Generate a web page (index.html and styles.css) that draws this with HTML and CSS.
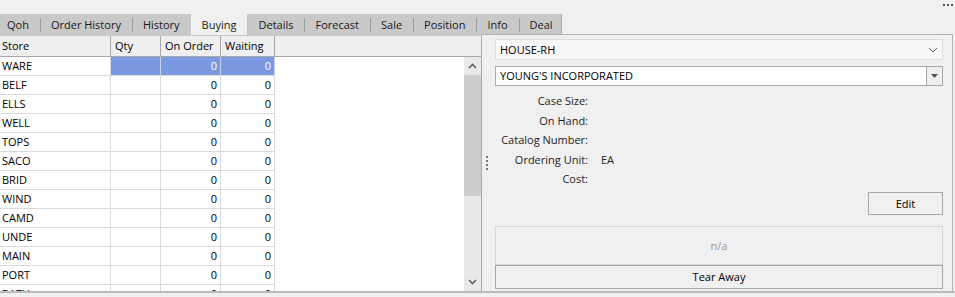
FILE: index.html
```html
<!DOCTYPE html>
<html lang="en">

<head>
  <meta charset="utf-8" />
  <title>Buying</title>
  <meta name="viewport" content="width=device-width, initial-scale=1" />
  <link rel="stylesheet" href="styles.css">
</head>

<body>
  <div class="window">
    <div class="topbar">
      <div class="more"><span></span><span></span><span></span></div>
    </div>

    <div class="tabs">
      <div class="tab">Qoh</div>
      <div class="tab">Order History</div>
      <div class="tab">History</div>
      <div class="tab active">Buying</div>
      <div class="tab">Details</div>
      <div class="tab">Forecast</div>
      <div class="tab">Sale</div>
      <div class="tab">Position</div>
      <div class="tab">Info</div>
      <div class="tab">Deal</div>
    </div>

    <div class="main">
      <!-- store grid -->
      <div class="left-panel">
        <div class="grid-head">
          <div class="hcell col-store">Store</div>
          <div class="hcell col-qty">Qty</div>
          <div class="hcell col-order">On Order</div>
          <div class="hcell col-wait">Waiting</div>
        </div>
        <div class="grid-body">
          <div class="rows">
            <div class="row selected">
              <div class="cell col-store">WARE</div>
              <div class="cell col-qty"></div>
              <div class="cell col-order num">0</div>
              <div class="cell col-wait num">0</div>
            </div>
            <div class="row"><div class="cell col-store">BELF</div><div class="cell col-qty"></div><div class="cell col-order num">0</div><div class="cell col-wait num">0</div></div>
            <div class="row"><div class="cell col-store">ELLS</div><div class="cell col-qty"></div><div class="cell col-order num">0</div><div class="cell col-wait num">0</div></div>
            <div class="row"><div class="cell col-store">WELL</div><div class="cell col-qty"></div><div class="cell col-order num">0</div><div class="cell col-wait num">0</div></div>
            <div class="row"><div class="cell col-store">TOPS</div><div class="cell col-qty"></div><div class="cell col-order num">0</div><div class="cell col-wait num">0</div></div>
            <div class="row"><div class="cell col-store">SACO</div><div class="cell col-qty"></div><div class="cell col-order num">0</div><div class="cell col-wait num">0</div></div>
            <div class="row"><div class="cell col-store">BRID</div><div class="cell col-qty"></div><div class="cell col-order num">0</div><div class="cell col-wait num">0</div></div>
            <div class="row"><div class="cell col-store">WIND</div><div class="cell col-qty"></div><div class="cell col-order num">0</div><div class="cell col-wait num">0</div></div>
            <div class="row"><div class="cell col-store">CAMD</div><div class="cell col-qty"></div><div class="cell col-order num">0</div><div class="cell col-wait num">0</div></div>
            <div class="row"><div class="cell col-store">UNDE</div><div class="cell col-qty"></div><div class="cell col-order num">0</div><div class="cell col-wait num">0</div></div>
            <div class="row"><div class="cell col-store">MAIN</div><div class="cell col-qty"></div><div class="cell col-order num">0</div><div class="cell col-wait num">0</div></div>
            <div class="row"><div class="cell col-store">PORT</div><div class="cell col-qty"></div><div class="cell col-order num">0</div><div class="cell col-wait num">0</div></div>
            <div class="row"><div class="cell col-store">BATH</div><div class="cell col-qty"></div><div class="cell col-order num">0</div><div class="cell col-wait num">0</div></div>
          </div>
          <div class="scrollbar">
            <div class="sb-btn">
              <svg width="9" height="6" viewBox="0 0 9 6"><path d="M1 5 L4.5 1.5 L8 5" fill="none" stroke="#606060" stroke-width="1.6"/></svg>
            </div>
            <div class="sb-thumb"></div>
            <div class="sb-track"></div>
            <div class="sb-btn">
              <svg width="9" height="6" viewBox="0 0 9 6"><path d="M1 1 L4.5 4.5 L8 1" fill="none" stroke="#606060" stroke-width="1.6"/></svg>
            </div>
          </div>
        </div>
      </div>

      <!-- vendor details -->
      <div class="right-panel">
        <div class="grip"><span></span><span></span><span></span><span></span></div>

        <div class="select">
          <span>HOUSE-RH</span>
          <svg width="10" height="6" viewBox="0 0 10 6"><path d="M1 1 L5 5 L9 1" fill="none" stroke="#606060" stroke-width="1"/></svg>
        </div>

        <div class="combo">
          <span class="combo-text">YOUNG'S INCORPORATED</span>
          <span class="combo-btn">
            <svg width="7" height="4" viewBox="0 0 7 4"><path d="M0 0 H7 L3.5 4 Z" fill="#555"/></svg>
          </span>
        </div>

        <div class="fields">
          <div class="label">Case Size:</div><div class="value"></div>
          <div class="label">On Hand:</div><div class="value"></div>
          <div class="label">Catalog Number:</div><div class="value"></div>
          <div class="label">Ordering Unit:</div><div class="value">EA</div>
          <div class="label">Cost:</div><div class="value"></div>
        </div>

        <div class="edit-row">
          <div class="button edit">Edit</div>
        </div>

        <div class="preview">n/a</div>
        <div class="button tear">Tear Away</div>
      </div>
    </div>
  </div>
</body>

</html>
```

FILE: styles.css
```css
/* Global */
* {
  box-sizing: border-box;
  padding: 0;
  margin: 0;
}

body {
  background-color: #f0f0f0;
  font-family: "Open Sans", "Noto Sans", sans-serif;
  font-size: 11px;
  color: #000;
}

.window {
  width: 955px;
  height: 297px;
  overflow: hidden;
}

/* top strip with the overflow dots */
.topbar {
  height: 14px;
  display: flex;
  justify-content: flex-end;
  padding: 4px 2px 0 0;
}

.more {
  display: flex;
  gap: 2px;
  height: 2px;
}

.more span {
  width: 2px;
  height: 2px;
  background-color: #555;
}

/* tabs */
.tabs {
  width: 562px;
  height: 21px;
  display: flex;
  background-color: #c9c9c9;
  border-right: 1px solid #a9a9a9;
}

.tab {
  position: relative;
  padding: 0 11px;
  line-height: 21px;
  white-space: nowrap;
  color: #1a1a1a;
}

.tab:first-child {
  padding-left: 7px;
}

.tab + .tab::before {
  content: "";
  position: absolute;
  left: 0;
  top: 4px;
  height: 14px;
  border-left: 1px solid #9c9c9c;
}

.tab.active {
  background-color: #f0f0f0;
}

.tab.active::before,
.tab.active + .tab::before {
  display: none;
}

/* main area */
.main {
  display: flex;
  height: 258px;
  border-bottom: 2px solid #bababa;
}

.left-panel {
  width: 482px;
  display: flex;
  flex-direction: column;
  border-right: 1px solid #a8a8a8;
  background-color: #fff;
}

.grid-head {
  display: flex;
  height: 22px;
  background-color: #efefef;
  border-top: 1px solid #c9c9c9;
  border-bottom: 1px solid #a8a8a8;
}

.hcell {
  line-height: 20px;
  padding-left: 4px;
  border-right: 1px solid #a8a8a8;
}

.hcell.col-store {
  padding-left: 2px;
}

.col-store {
  width: 111px;
}

.col-qty {
  width: 50px;
}

.col-order {
  width: 60px;
}

.col-wait {
  width: 54px;
}

.grid-body {
  flex: 1;
  display: flex;
  min-height: 0;
}

.rows {
  flex: 1;
  overflow: hidden;
}

.row {
  display: flex;
  height: 19px;
}

.cell {
  line-height: 18px;
  padding-left: 2px;
  border-right: 1px solid #dadada;
  border-bottom: 1px solid #dadada;
}

.cell.num {
  text-align: right;
  padding-right: 3px;
}

.row.selected .col-qty,
.row.selected .col-order,
.row.selected .col-wait {
  background-color: #7a99e0;
  color: #fff;
  border-right-color: #c6d2f0;
}

/* scrollbar */
.scrollbar {
  width: 17px;
  display: flex;
  flex-direction: column;
  background-color: #e9e9e9;
}

.sb-btn {
  height: 18px;
  display: flex;
  align-items: center;
  justify-content: center;
}

.sb-thumb {
  height: 121px;
  background-color: #cdcdcd;
}

.sb-track {
  flex: 1;
}

/* right panel */
.right-panel {
  position: relative;
  flex: 1;
  margin-right: 2px;
  margin-top: -1px;
  padding: 4px 9px 0 13px;
  border-top: 1px solid #b4b4b4;
  border-right: 1px solid #b4b4b4;
}

.grip {
  position: absolute;
  left: 4px;
  top: 121px;
  display: flex;
  flex-direction: column;
  gap: 2px;
}

.grip span {
  width: 2px;
  height: 2px;
  background-color: #777;
}

.select {
  height: 21px;
  display: flex;
  align-items: center;
  justify-content: space-between;
  padding: 0 4px;
  background-color: #f8f8f8;
  border: 1px solid #dcdcdc;
}

.combo {
  margin-top: 6px;
  height: 20px;
  display: flex;
  background-color: #fff;
  border: 1px solid #a8a8a8;
}

.combo-text {
  flex: 1;
  line-height: 18px;
  padding-left: 4px;
}

.combo-btn {
  width: 16px;
  display: flex;
  align-items: center;
  justify-content: center;
  background-color: #f0f0f0;
  border-left: 1px solid #a8a8a8;
}

.fields {
  margin-top: 5px;
  display: grid;
  grid-template-columns: 93px 1fr;
  column-gap: 13px;
  grid-auto-rows: 19.5px;
  align-items: center;
  color: #1e1e1e;
}

.label {
  text-align: right;
}

.edit-row {
  display: flex;
  justify-content: flex-end;
  margin-top: 3px;
}

.button {
  border: 1px solid #a8a8a8;
  background-color: #f0f0f0;
  text-align: center;
}

.edit {
  width: 75px;
  height: 23px;
  line-height: 21px;
}

.preview {
  margin-top: 11px;
  height: 39px;
  line-height: 37px;
  text-align: center;
  color: #9a9a9a;
  border: 1px solid #d6d6d6;
}

.tear {
  height: 24px;
  line-height: 22px;
}
```
